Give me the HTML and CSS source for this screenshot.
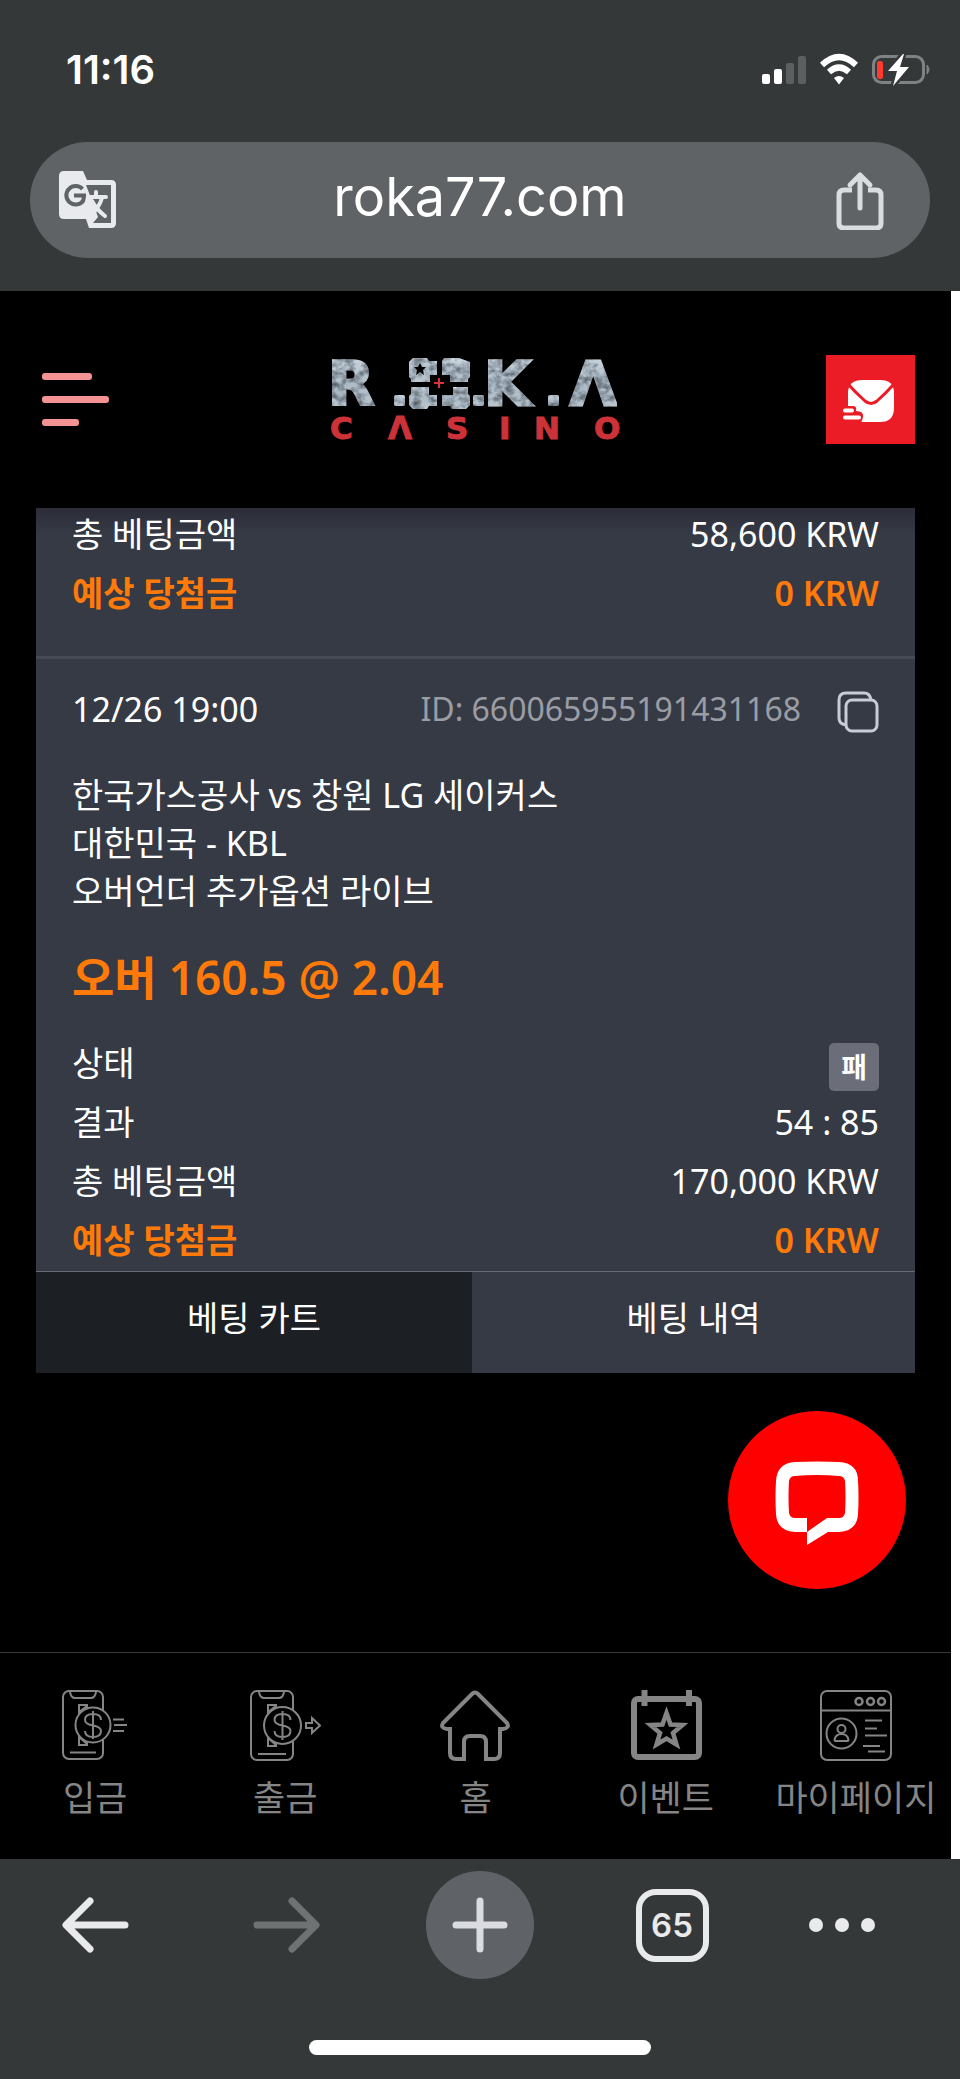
FILE: index.html
```html
<!DOCTYPE html>
<html lang="ko">
<head>
<meta charset="utf-8">
<meta name="viewport" content="width=device-width, initial-scale=1">
<title>roka77.com</title>
<link rel="stylesheet" href="styles.css">
</head>
<body>
<header class="chrome-top">
  <div class="status">
    <time class="clock">11:16</time>
    <svg class="status-icons" viewBox="0 0 170 34" aria-hidden="true">
      <g fill="#fff"><rect x="0" y="21" width="8" height="10" rx="2"/><rect x="12" y="16" width="8" height="15" rx="2"/></g>
      <g fill="#5c5f60"><rect x="24" y="10" width="8" height="21" rx="2"/><rect x="36" y="3" width="8" height="28" rx="2"/></g>
      <g fill="none" stroke="#fff" stroke-width="6"><path d="M60 12Q77 -4 94 12"/><path d="M67 19Q77 10 87 19"/></g>
      <path d="M77 31.500l-5-6.500q5-4 10 0z" fill="#fff"/>
      <rect x="111.500" y="3.500" width="50" height="26" rx="8" fill="none" stroke="#7f8283" stroke-width="3"/>
      <path d="M165 12q4 4.500 0 9z" fill="#7f8283" stroke="#7f8283"/>
      <rect x="115" y="8" width="6" height="18" rx="2.500" fill="#ff3b30"/>
      <path d="M141 1l-15 17h9l-4 15 16-19h-9l4-13z" fill="#fff" stroke="#353839" stroke-width="5" paint-order="stroke" stroke-linejoin="round"/>
    </svg>
  </div>
  <div class="address">
    <button class="plain" type="button" aria-label="번역">
      <svg class="translate" viewBox="0 0 58 58" aria-hidden="true">
        <path d="M5 0H24l4 9H52q5 0 5 5V52q0 5-5 5H30l-3-9H5q-5 0-5-5V5q0-5 5-5z" fill="#e8eaed"/>
        <path d="M27 14H52V52H34l5-6-7-19z" fill="#5f6365"/>
        <path d="M23.500 18A9.300 9.300 0 1 0 24 30Q25 27 25 24.500H15" fill="none" stroke="#5f6365" stroke-width="4"/>
        <path d="M29 26H47M37 21v5M43 27Q40 37 31 45M33 30Q37 38 46 45" fill="none" stroke="#e8eaed" stroke-width="4" stroke-linecap="round"/>
      </svg>
    </button>
    <span class="url">roka77.com</span>
    <button class="plain" type="button" aria-label="공유">
      <svg class="share" viewBox="0 0 50 60" fill="none" stroke="#dadde0" stroke-width="5" stroke-linecap="round" stroke-linejoin="round" aria-hidden="true">
        <path d="M17 20H9q-5 0-5 5V53q0 5 5 5H41q5 0 5-5V25q0-5-5-5H33" stroke-linecap="butt"/>
        <path d="M25 38V5M15 15L25 5 35 15"/>
      </svg>
    </button>
  </div>
</header>

<div class="site">
  <header class="site-head">
    <button class="plain menu" type="button" aria-label="메뉴"><i class="bar bar-mid"></i><i class="bar bar-long"></i><i class="bar bar-short"></i></button>
    <a class="logo-link" href="#" aria-label="ROKA CASINO">
      <svg class="logo" viewBox="0 0 292 84">
        <defs>
          <linearGradient id="steel" x1="0" y1="0" x2="0" y2="1"><stop offset="0" stop-color="#d3dbe1"/><stop offset=".5" stop-color="#b0bcc5"/><stop offset="1" stop-color="#bec8cf"/></linearGradient>
          <filter id="worn" x="0" y="0" width="100%" height="100%" color-interpolation-filters="sRGB">
            <feTurbulence type="fractalNoise" baseFrequency=".12 .16" numOctaves="3" seed="4"/>
            <feColorMatrix values="1 0 0 0 .34  1 0 0 0 .36  1 0 0 0 .38  0 0 0 0 1" result="n"/>
            <feBlend in="SourceGraphic" in2="n" mode="multiply"/>
            <feComposite in2="SourceAlpha" operator="in"/>
          </filter>
        </defs>
        <g filter="url(#worn)" fill="url(#steel)">
          <text class="logo-roka" y="47"><tspan x="-2">R</tspan><tspan x="154">K</tspan><tspan x="240">Λ</tspan></text>
          <rect x="64" y="37" width="11" height="11" rx="2"/>
          <rect x="143" y="37" width="11" height="11" rx="2"/>
          <rect x="218" y="37" width="11" height="11" rx="2"/>
          <path d="M83 0h14l2 3h8v14h-7v7H81v-3l-2-2V4z"/>
          <path d="M129 0h-15l-2 3v14h8v7h18v-3l2-2V4z"/>
          <path d="M81 29h18v8h8v11h-8l-2 3H83l-4-4V38l2-2z"/>
          <path d="M123 29h15v7l2 2v9l-4 4h-14l-2-3h-8V37h11z"/>
        </g>
        <path d="M90 5l2 4h4l-3 3 1 5-4-3-4 3 1-5-3-3h4z" fill="#000"/>
        <path d="M109 20v10M104 25h10" stroke="#d8333c" stroke-width="2"/>
        <text class="logo-casino" y="81" x="0 58 116 169 204 264">CΛSINO</text>
      </svg>
    </a>
    <button class="plain mail" type="button" aria-label="쪽지">
      <svg viewBox="0 0 89 89" aria-hidden="true">
        <path d="M37 25H54Q68 25 68 38V53Q68 67 54 67H38Q22 67 22 53V38Q22 25 37 25z" fill="#fff"/>
        <path d="M22 29Q29 37 39 46q6 5 12 0Q60 38 68 29" fill="none" stroke="#ec1c26" stroke-width="3"/>
        <path d="M17 51H27q4 0 3 5 8 0 7 6-1 5-3 6H17z" fill="#ec1c26"/>
        <path d="M19 55.500H26M19 62.500H33" stroke="#fff" stroke-width="4" stroke-linecap="round"/>
      </svg>
    </button>
  </header>

  <main class="content">
    <section class="panel">
      <div class="tickets">
        <article class="ticket ticket-scrolled">
          <dl class="facts">
            <div class="fact"><dt>총 베팅금액</dt><dd>58,600 KRW</dd></div>
            <div class="fact fact-win"><dt>예상 당첨금</dt><dd>0 KRW</dd></div>
          </dl>
        </article>
        <article class="ticket">
          <div class="ticket-head">
            <time>12/26 19:00</time>
            <span class="ticket-id">ID: 660065955191431168</span>
            <button class="plain" type="button" aria-label="복사">
              <svg class="copy" viewBox="0 0 42 50" fill="none" stroke="#c9ccd4" stroke-width="3" aria-hidden="true">
                <rect x="9" y="16" width="31" height="31" rx="6"/><path d="M9 41Q2 40 2 34V16q0-7 7-7H27q6 0 7 7"/>
              </svg>
            </button>
          </div>
          <p class="match">한국가스공사 vs 창원 LG 세이커스<br>대한민국 - KBL<br>오버언더 추가옵션 라이브</p>
          <p class="pick">오버 160.5 @ 2.04</p>
          <dl class="facts">
            <div class="fact"><dt>상태</dt><dd class="state"><span class="badge">패</span></dd></div>
            <div class="fact"><dt>결과</dt><dd>54 : 85</dd></div>
            <div class="fact"><dt>총 베팅금액</dt><dd>170,000 KRW</dd></div>
            <div class="fact fact-win"><dt>예상 당첨금</dt><dd>0 KRW</dd></div>
          </dl>
        </article>
      </div>
      <div class="tabs">
        <button class="tab tab-dark" type="button">베팅 카트</button>
        <button class="tab" type="button">베팅 내역</button>
      </div>
    </section>
    <button class="chat" type="button" aria-label="채팅">
      <svg viewBox="0 0 178 178" aria-hidden="true">
        <path d="M67 51Q89 50 111 51Q130 52 130 70Q131 86 130 103Q129 120 111 121H100L79 134V107L79 121H67Q49 120 48 103Q47 86 48 70Q49 52 67 51z" fill="#fff"/>
        <path d="M67 65Q89 63 111 65Q116 65 117 70Q118 86 117 102Q116 107 111 107H99L79 121V107H67Q62 107 61 102Q60 86 61 70Q62 65 67 65z" fill="#f00"/>
      </svg>
    </button>
  </main>

  <nav class="site-nav">
    <a class="nav-item" href="#">
      <svg class="nav-icon" viewBox="0 0 72 72" stroke-width="2" aria-hidden="true">
        <rect x="4" y="1" width="40" height="68" rx="6"/>
        <path d="M11 2q1 6 5 6H32q4 0 5-6M11 62.500H37"/>
        <path d="M28 20V15H20V55H28V50M20 22l8-6M20 47l8 7"/>
        <circle cx="34" cy="35" r="17.500" fill="#000"/>
        <path d="M42 30q0-6-8-6t-8 6q0 4 8 5.500t8 5.500q0 6-8 6t-8-6M34 21V49"/>
        <path d="M54 29.500H65M55 35H68M54 41H65"/>
      </svg>입금</a>
    <a class="nav-item" href="#">
      <svg class="nav-icon" viewBox="0 0 72 72" stroke-width="2" aria-hidden="true">
        <rect x="2" y="1" width="42" height="69" rx="6"/>
        <path d="M10 2q1 6 5 6H30q4 0 5-6M9 64H37"/>
        <path d="M27 20V15H19V56H27V51M19 22l8-6M19 48l8 7"/>
        <circle cx="33.500" cy="35.500" r="18.500" fill="#000"/>
        <path d="M41.500 30q0-6-8-6t-8 6q0 4 8 5.500t8 5.500q0 6-8 6t-8-6M33.500 21V50"/>
        <path d="M57 33H63V28L71 35.500 63 43V38H57z"/>
      </svg>출금</a>
    <a class="nav-item" href="#">
      <svg class="nav-icon" viewBox="0 0 72 72" stroke-width="4" aria-hidden="true">
        <path d="M11 39H8Q1 38 4 33L33 4q3-3 6 0L68 33q3 5-4 6H61V63q0 6-6 6H47V52q0-6-6-6H31q-6 0-6 6V69H17q-6 0-6-6z"/>
      </svg>홈</a>
    <a class="nav-item" href="#">
      <svg class="nav-icon" viewBox="0 0 72 72" stroke-width="6" aria-hidden="true">
        <rect x="4" y="9" width="65" height="58" rx="4"/>
        <path d="M14.500 0V16M59 0V16"/>
        <path d="M36.500 23l4 11.500 12 .5-9.500 8 3.500 11.500L36.500 48.500 26.500 54.500 30 43l-9.500-8 12-.5z" stroke-width="4.500" stroke-linejoin="miter"/>
      </svg>이벤트</a>
    <a class="nav-item" href="#">
      <svg class="nav-icon" viewBox="0 0 72 72" stroke-width="2" aria-hidden="true">
        <rect x="1" y="1" width="70" height="69" rx="6"/>
        <path d="M1 20.500H71M45 30.500H62M45 38.500H57M45 45.500H67M43 56H60M48 61.500H65"/>
        <g stroke-width="2.500"><circle cx="39" cy="11.500" r="3.500"/><circle cx="50.500" cy="11.500" r="3.500"/><circle cx="61.500" cy="11.500" r="3.500"/></g>
        <circle cx="21.500" cy="43.500" r="15"/><circle cx="21.500" cy="39" r="4"/>
        <path d="M14.500 50Q15.500 44 21.500 44T28.500 50Q28.500 51 27.500 51H15.500Q14.500 51 14.500 50z"/>
      </svg>마이페이지</a>
  </nav>
</div>

<footer class="chrome-bottom">
  <nav class="toolbar">
    <button class="plain" type="button" aria-label="뒤로">
      <svg class="tool" viewBox="0 0 72 72" aria-hidden="true"><path d="M65 36H7M30 12L6 36 30 60"/></svg>
    </button>
    <button class="plain" type="button" aria-label="앞으로" disabled>
      <svg class="tool tool-off" viewBox="0 0 72 72" aria-hidden="true"><path d="M5 36H63M40 12L64 36 40 60"/></svg>
    </button>
    <button class="plain new-tab" type="button" aria-label="새 탭">
      <svg class="tool tool-plus" viewBox="0 0 72 72" aria-hidden="true"><path d="M36 12V60M12 36H60"/></svg>
    </button>
    <button class="tab-count" type="button">65</button>
    <button class="plain more" type="button" aria-label="더보기"><i class="dot"></i><i class="dot"></i><i class="dot"></i></button>
  </nav>
  <div class="home-bar"></div>
</footer>
</body>
</html>
```
FILE: styles.css
```css
* {
  box-sizing: border-box;
}

body {
  margin: 0;
  min-height: 100vh;
  display: flex;
  flex-direction: column;
  background: #353839;
  color: #fff;
  font-family: "Noto Sans", "Noto Sans CJK KR", sans-serif;
  font-size: 34px;
}

button {
  font: inherit;
  color: inherit;
  border: 0;
  padding: 0;
  cursor: pointer;
}

svg {
  display: block;
}

p,
dl,
dd {
  margin: 0;
}

.plain {
  background: none;
}

/* Browser top */
.chrome-top {
  padding: 48px 28px 33px 30px;
}

.status {
  display: flex;
  align-items: center;
  justify-content: space-between;
  height: 44px;
  margin-bottom: 50px;
  padding-left: 36px;
}

.clock {
  font: 600 40px/44px Inter, sans-serif;
}

.status-icons {
  width: 170px;
  height: 34px;
}

.address {
  display: flex;
  align-items: center;
  justify-content: space-between;
  height: 116px;
  margin-right: 2px;
  padding: 0 45px 0 29px;
  border-radius: 58px;
  background: #5f6365;
}

.url {
  padding: 0 0 6px 8px;
  font: 400 54px/64px Inter, sans-serif;
}

.translate {
  width: 58px;
  height: 58px;
}

.share {
  width: 50px;
  height: 60px;
}

/* Site */
.site {
  flex: 1;
  display: flex;
  flex-direction: column;
  background: #000;
  border-right: 9px solid #fff;
}

.site-head {
  display: flex;
  align-items: center;
  justify-content: space-between;
  padding: 64px 36px;
}

.menu {
  display: flex;
  flex-direction: column;
  gap: 16px;
  width: 89px;
  padding-left: 6px;
}

.bar {
  height: 7px;
  border-radius: 3px;
  background: #f49393;
}

.bar-mid {
  width: 50px;
}

.bar-long {
  width: 67px;
}

.bar-short {
  width: 37px;
}

.logo {
  width: 292px;
  height: 84px;
  overflow: visible;
}

.logo-roka {
  font: 700 60px "DejaVu Sans", sans-serif;
  stroke: url(#steel);
  stroke-width: 3px;
}

.logo-casino {
  font: 700 31px "DejaVu Sans", sans-serif;
  fill: #cc3238;
  stroke: #cc3238;
  stroke-width: 1px;
}

.mail {
  width: 89px;
  height: 89px;
  background: #ec1c26;
}

.content {
  position: relative;
  flex: 1;
  padding: 0 36px;
}

.panel {
  background: #363a45;
}

.tickets {
  overflow: hidden;
  background: linear-gradient(#2b2c38, #363a45 26px);
}

.ticket {
  padding: 25px 36px 2px;
}

.ticket-scrolled {
  margin-top: -4px;
  padding: 0 36px 34px;
  border-bottom: 3px solid #454a56;
}

.fact {
  display: flex;
  align-items: center;
  justify-content: space-between;
  height: 59px;
  line-height: 58px;
}

.fact-win {
  color: #ff7a08;
  font-weight: 600;
}

.state {
  padding-top: 8px;
}

.badge {
  display: block;
  padding: 0 12px;
  border-radius: 5px;
  background: #6b6e79;
  font-size: 28px;
  font-weight: 700;
  line-height: 48px;
}

.ticket-head {
  display: flex;
  align-items: center;
  height: 50px;
  line-height: 48px;
}

.ticket-id {
  margin: 0 36px 0 auto;
  color: #9b9da4;
  font-size: 32px;
}

.copy {
  width: 42px;
  height: 50px;
}

.match {
  margin-top: 37px;
  line-height: 48px;
}

.pick {
  margin: 32px 0 26px;
  color: #ff7a08;
  font-size: 46px;
  font-weight: 600;
  line-height: 60px;
}

.tabs {
  display: grid;
  grid-template-columns: 436fr 443fr;
  border-top: 1px solid #686b73;
}

.tab {
  padding: 22px 0 31px;
  background: #363a45;
  line-height: 48px;
}

.tab-dark {
  background: #1c1f23;
}

.chat {
  position: absolute;
  right: 45px;
  bottom: 63px;
  width: 178px;
  height: 178px;
  border-radius: 50%;
  background: #f00;
}

.site-nav {
  display: grid;
  grid-template-columns: repeat(5, 1fr);
  border-top: 1px solid #3a3a3a;
  padding: 37px 0 39px;
}

.nav-item {
  display: flex;
  flex-direction: column;
  align-items: center;
  gap: 14px;
  color: #858585;
  font-size: 35px;
  line-height: 44px;
  text-decoration: none;
  white-space: nowrap;
}

.nav-icon {
  width: 72px;
  height: 72px;
  fill: none;
  stroke: #858585;
}

/* Browser bottom */
.chrome-bottom {
  padding: 12px 0 24px;
}

.toolbar {
  display: grid;
  grid-template-columns: repeat(5, 1fr);
  place-items: center;
}

.tool {
  width: 72px;
  height: 72px;
  fill: none;
  stroke: #e8eaeb;
  stroke-width: 7;
  stroke-linecap: round;
  stroke-linejoin: round;
}

.tool-off {
  stroke: #6f7273;
}

.tool-plus {
  stroke: #dadce2;
}

.new-tab {
  display: grid;
  place-items: center;
  width: 108px;
  height: 108px;
  border-radius: 50%;
  background: #5f6368;
}

.tab-count {
  width: 73px;
  height: 73px;
  border: 6px solid #e8eaeb;
  border-radius: 20px;
  background: none;
  color: #e8eaeb;
  font: 600 33px/60px Inter, sans-serif;
}

.more {
  display: flex;
  gap: 12px;
  margin-right: 44px;
}

.dot {
  width: 14px;
  height: 14px;
  border-radius: 50%;
  background: #e8eaeb;
}

.home-bar {
  width: 342px;
  height: 15px;
  margin: 61px auto 0;
  border-radius: 8px;
  background: #fff;
}
```
